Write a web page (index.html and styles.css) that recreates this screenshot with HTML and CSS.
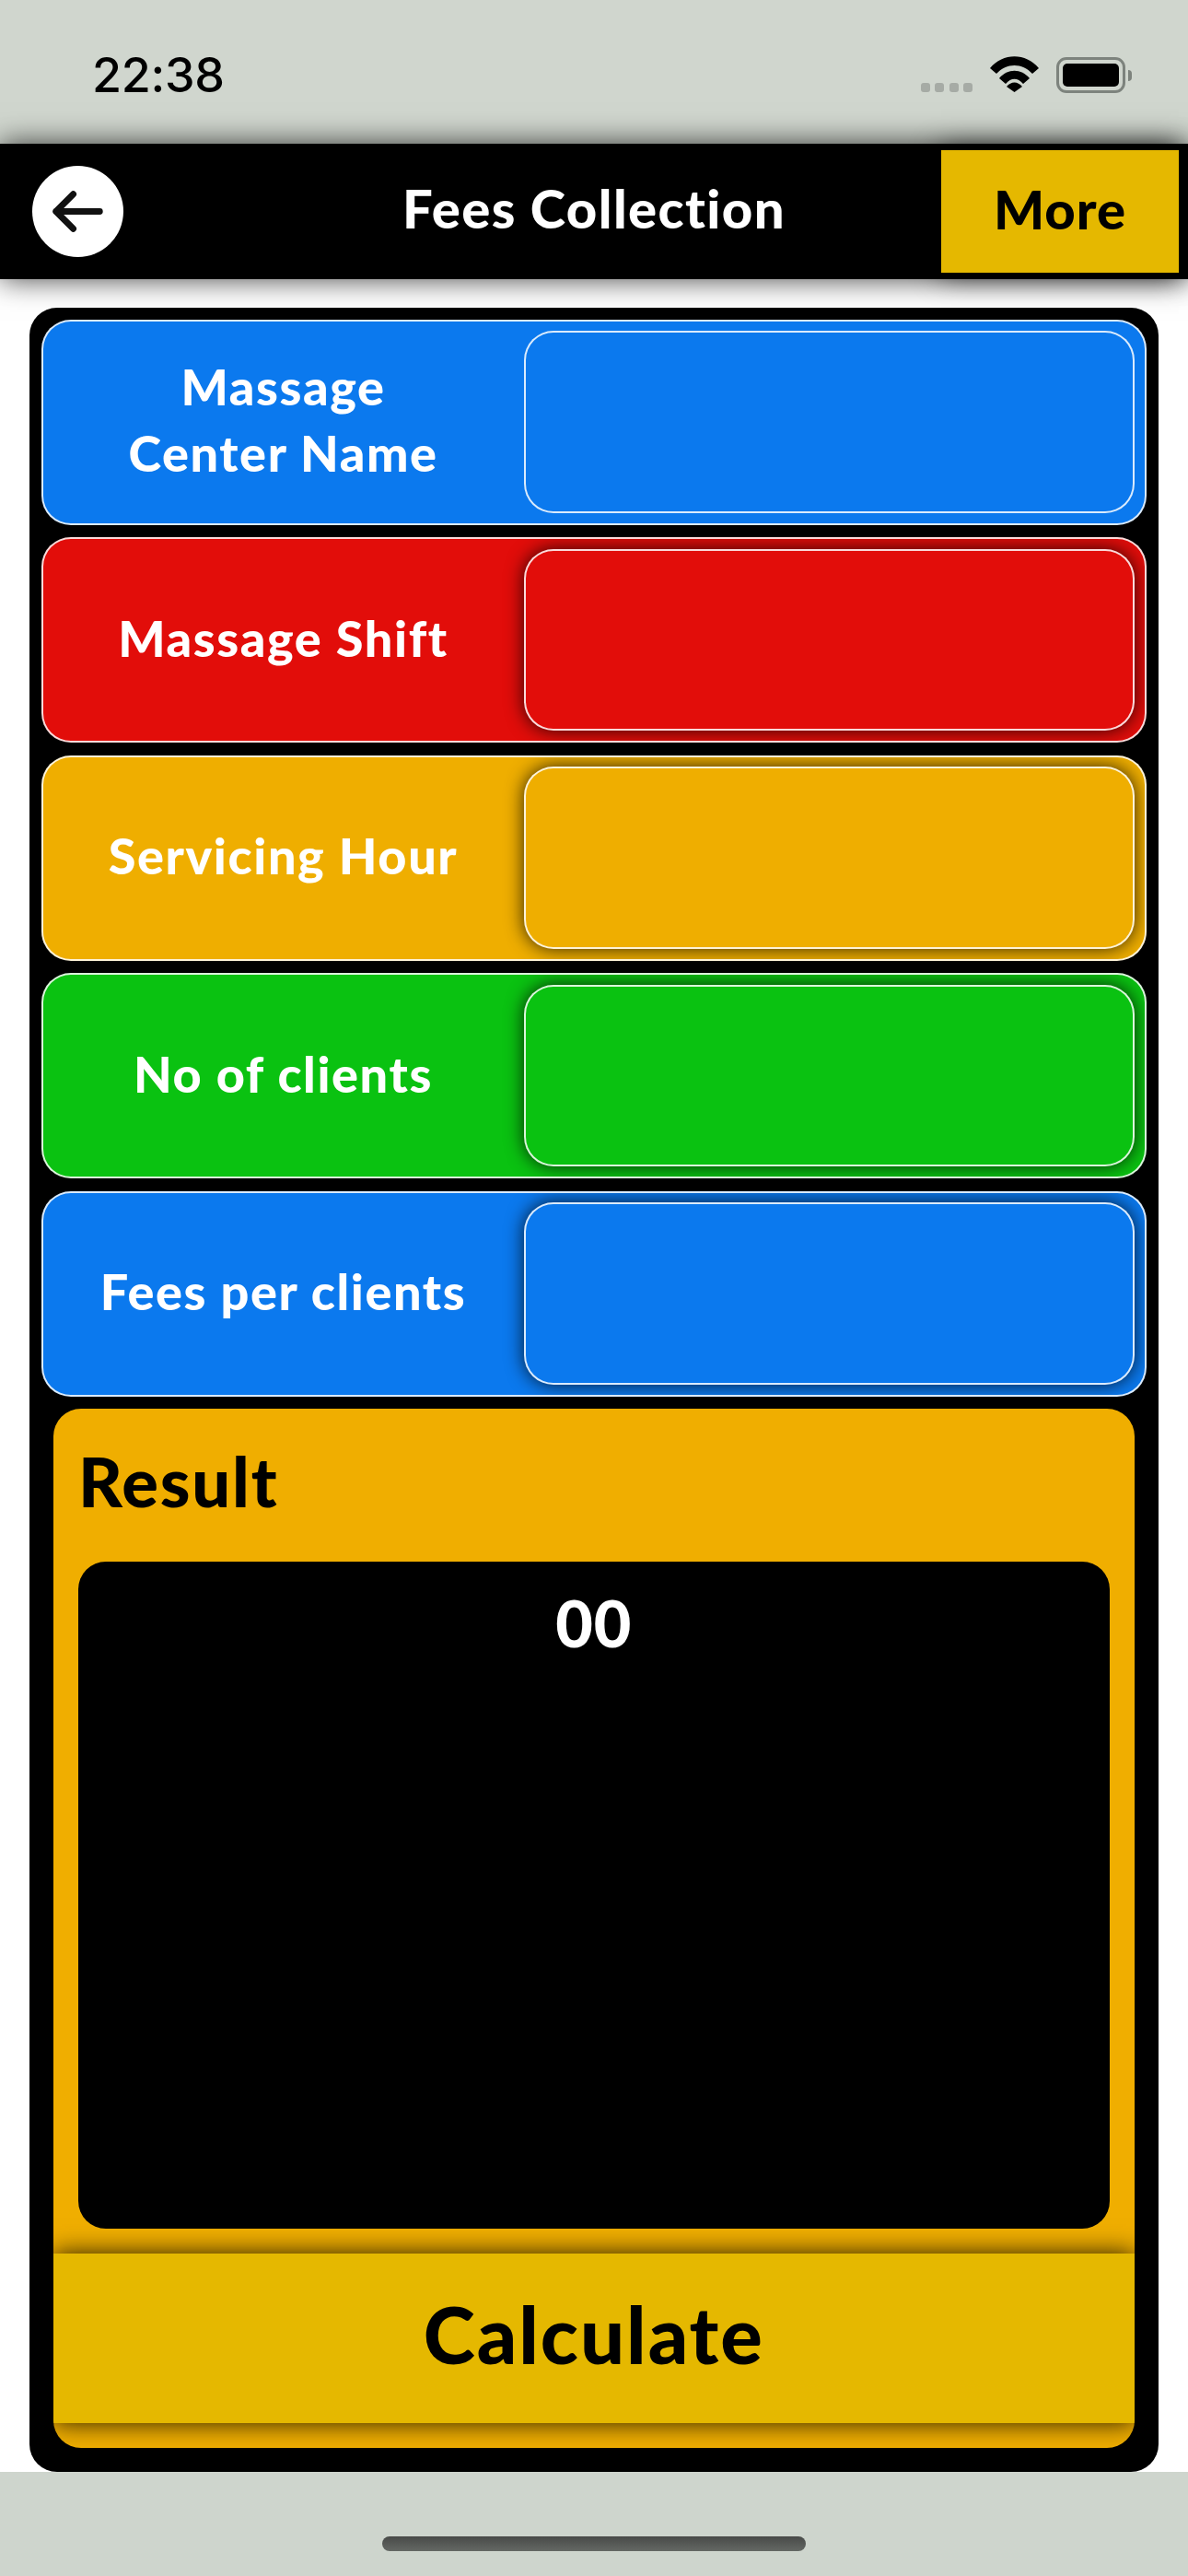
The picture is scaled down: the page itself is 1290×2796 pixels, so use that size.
FILE: index.html
```html
<!DOCTYPE html>
<html>

<head>
  <meta charset="UTF-8">
  <title>Fees Collection</title>
  <link rel="stylesheet" href="styles.css">
</head>

<body>
  <div class="status-bar">
    <div class="time">22:38</div>
    <div class="status-icons">
      <div class="signal">
        <span></span>
        <span></span>
        <span></span>
        <span></span>
      </div>
      <svg class="wifi" viewBox="0 0 53 39">
        <path d="M0 13C14 -4 39 -4 53 13L46 19C35 7 18 7 7 19Z" />
        <path d="M10 24C19 13 34 13 43 24L36 30C30 23 23 23 17 30Z" />
        <path d="M18 33C23 27 30 27 35 33L26.500 39Z" />
      </svg>
      <div class="battery">
        <div class="battery-body">
          <div class="battery-level"></div>
        </div>
        <div class="battery-cap"></div>
      </div>
    </div>
  </div>

  <div class="header">
    <button class="back-button">
      <svg viewBox="0 0 100 100">
        <path d="M74 50H26M45 31L26 50L45 69" />
      </svg>
    </button>
    <h1>Fees Collection</h1>
    <button class="more-button">More</button>
  </div>

  <div class="content">
    <div class="panel">
      <div class="field field-blue field-flat">
        <label>Massage<br>Center Name</label>
        <input type="text">
      </div>
      <div class="field field-red">
        <label>Massage Shift</label>
        <input type="text">
      </div>
      <div class="field field-orange">
        <label>Servicing Hour</label>
        <input type="text">
      </div>
      <div class="field field-green">
        <label>No of clients</label>
        <input type="text">
      </div>
      <div class="field field-blue">
        <label>Fees per clients</label>
        <input type="text">
      </div>

      <div class="result">
        <div class="result-title">Result</div>
        <div class="result-box">00</div>
        <button class="calculate-button">Calculate</button>
      </div>
    </div>
  </div>

  <div class="home-bar">
    <div class="home-indicator"></div>
  </div>
</body>

</html>
```

FILE: styles.css
```css
* {
  box-sizing: border-box;
}

body {
  font-family: 'Lato', 'Open Sans', sans-serif;
  font-variant-ligatures: none;
  width: 1290px;
  height: 2796px;
  margin: 0;
  display: flex;
  flex-direction: column;
  background-color: #fff;
  color: #000;
}

button {
  border: none;
  padding: 0;
  font-family: inherit;
  font-variant-ligatures: none;
  cursor: pointer;
}

/* Barra de status */
.status-bar {
  flex: 0 0 156px;
  display: flex;
  justify-content: space-between;
  align-items: flex-start;
  padding: 62px 61px 0 100px;
  background-color: #d0d6ce;
}

.time {
  font-family: 'Inter', sans-serif;
  font-size: 52px;
  font-weight: 500;
  line-height: 40px;
  letter-spacing: -0.3px;
}

.status-icons {
  display: flex;
  align-items: flex-end;
  gap: 19px;
  height: 39px;
}

.signal {
  display: flex;
  gap: 5.300px;
  margin-bottom: 1px;
}

.signal span {
  width: 10px;
  height: 10px;
  border-radius: 3px;
  background-color: #a6aba5;
}

.wifi {
  width: 53px;
  height: 39px;
  margin-bottom: 1px;
}

.battery {
  display: flex;
  align-items: center;
  gap: 3px;
}

.battery-body {
  width: 75px;
  height: 39px;
  padding: 4px;
  border: 3px solid #7d837d;
  border-radius: 11px;
}

.battery-level {
  height: 100%;
  border-radius: 5px;
  background-color: #000;
}

.battery-cap {
  width: 4px;
  height: 12px;
  border-radius: 0 4px 4px 0;
  background-color: #7d837d;
}

/* Cabecalho */
.header {
  flex: 0 0 147px;
  position: relative;
  z-index: 1;
  display: grid;
  grid-template-columns: 1fr auto 1fr;
  align-items: center;
  background-color: #000;
  box-shadow: 0 0 30px rgba(0, 0, 0, 0.75);
}

.header h1 {
  margin: 0;
  padding-bottom: 7px;
  color: #fff;
  font-size: 58px;
  font-weight: 900;
  line-height: 1;
  letter-spacing: 1.400px;
}

.back-button {
  width: 99px;
  height: 99px;
  margin-left: 35px;
  border-radius: 50%;
  background-color: #fff;
}

.back-button svg {
  display: block;
  width: 100%;
  height: 100%;
  fill: none;
  stroke: #111;
  stroke-width: 7;
  stroke-linecap: round;
  stroke-linejoin: round;
}

.more-button {
  justify-self: end;
  width: 258px;
  height: 133px;
  margin-right: 10px;
  padding-bottom: 7px;
  background-color: #e5b800;
  box-shadow: 0 0 30px rgba(0, 0, 0, 0.75);
  font-size: 58px;
  font-weight: 900;
  letter-spacing: 1px;
  color: #000;
}

/* Conteudo */
.content {
  flex: 1;
  padding: 31px 32px 0;
}

.panel {
  height: 100%;
  display: flex;
  flex-direction: column;
  gap: 13.500px;
  padding: 12.500px 13.500px 26px 13px;
  border-radius: 30px;
  background-color: #000;
}

.field {
  flex: 0 0 223px;
  display: flex;
  align-items: center;
  padding: 0 10.500px 0 0;
  overflow: hidden;
  border: 2px solid rgba(255, 255, 255, 0.85);
  border-radius: 32px;
}

.field label {
  flex: 1;
  padding-bottom: 4px;
  padding-right: 1px;
  color: #fff;
  font-size: 54px;
  font-weight: 900;
  line-height: 72px;
  letter-spacing: 1.600px;
  text-align: center;
}

.field input {
  flex: 0 0 663px;
  height: 197.500px;
  border: 2px solid rgba(255, 255, 255, 0.85);
  border-radius: 32px;
  background-color: inherit;
  box-shadow: 0 0 20px rgba(0, 0, 0, 0.8);
  outline: none;
}

.field-flat input {
  box-shadow: none;
}

.field-blue {
  background-color: #0b79ee;
}

.field-red {
  background-color: #e20d0a;
}

.field-orange {
  background-color: #efae00;
}

.field-green {
  background-color: #0ac211;
}

/* Resultado */
.result {
  flex: 1;
  display: flex;
  flex-direction: column;
  margin: 0 13px;
  overflow: hidden;
  border-radius: 30px;
  background-color: #f0ae00;
}

.result-title {
  margin: 36px 0 0 27px;
  font-size: 74px;
  font-weight: 900;
  line-height: 86px;
  letter-spacing: 1.800px;
}

.result-box {
  flex: 0 0 724px;
  margin: 44px 27px 0;
  padding-top: 24px;
  border-radius: 30px;
  background-color: #000;
  color: #fff;
  font-size: 70px;
  font-weight: 900;
  line-height: 84px;
  letter-spacing: 1px;
  text-align: center;
}

.calculate-button {
  flex: 0 0 184px;
  margin-top: 27px;
  padding-bottom: 10px;
  background-color: #e5b800;
  box-shadow: 0 0 26px rgba(0, 0, 0, 0.85);
  font-size: 85px;
  font-weight: 900;
  letter-spacing: 2px;
  color: #000;
}

/* Barra inferior */
.home-bar {
  flex: 0 0 113px;
  display: flex;
  justify-content: center;
  padding-top: 70px;
  background-color: #ced5cd;
}

.home-indicator {
  width: 460px;
  height: 16px;
  border-radius: 8px;
  background: linear-gradient(#484a48, #646864);
}
```
